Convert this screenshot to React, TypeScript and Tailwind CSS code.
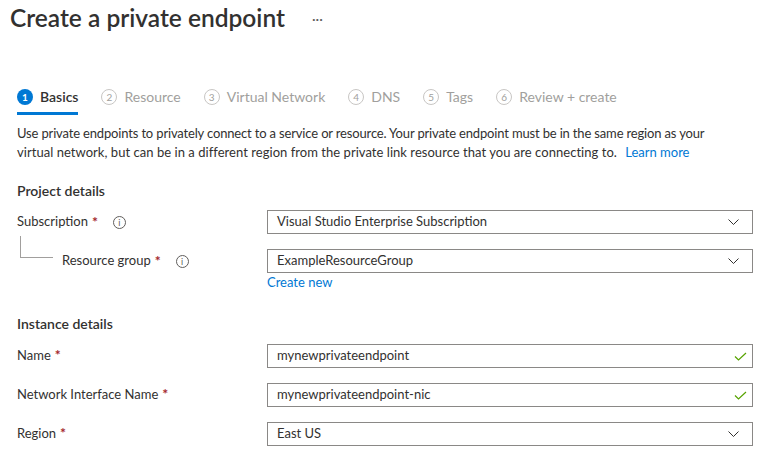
import { type ReactNode } from "react";

const tabs = [
  { n: 1, label: "Basics", active: true },
  { n: 2, label: "Resource" },
  { n: 3, label: "Virtual Network" },
  { n: 4, label: "DNS" },
  { n: 5, label: "Tags" },
  { n: 6, label: "Review + create" },
];

function Chevron() {
  return (
    <svg width="11" height="6" viewBox="0 0 11 6" className="mr-[7px] text-[#323130]">
      <path d="M0.5 0.5l5 5 5-5" fill="none" stroke="currentColor" strokeWidth="1" />
    </svg>
  );
}

function Check() {
  return (
    <svg width="13" height="9" viewBox="0 0 13 9" className="-mr-[1px] text-[#57a300]">
      <path d="M1 4.5l3.5 3.5L12 1" fill="none" stroke="currentColor" strokeWidth="1.2" />
    </svg>
  );
}

function Info() {
  return (
    <span className="ml-[15px] inline-flex h-[13px] w-[13px] items-center justify-center rounded-full border border-[#605e5c] text-[9px] leading-none text-[#605e5c]">
      i
    </span>
  );
}

function Star() {
  return <span className="ml-[4px] text-[14px] font-bold leading-none text-[#a4262c]">*</span>;
}

function Field({ value, icon }: { value: string; icon: ReactNode }) {
  return (
    <div className="flex h-[24px] items-center justify-between border border-[#8a8886] pl-[9px] pr-[6px] text-[13px] text-[#323130]">
      <span>{value}</span>
      {icon}
    </div>
  );
}

export default function App() {
  return (
    <div className="h-[459px] w-[764px] overflow-hidden bg-white text-[#323130]" style={{ fontFamily: "Lato, 'Liberation Sans', sans-serif" }}>
      {/* header */}
      <div className="flex h-[36px] items-center pl-[10px]">
        <h1 className="text-[24.5px] font-semibold leading-[36px] text-[#323130]">Create a private endpoint</h1>
        <span className="ml-[27px] text-[14px] text-[#605e5c]">···</span>
      </div>

      {/* steps */}
      <div className="mt-[45px] flex h-[34px] items-stretch gap-[23px] pl-[17px]">
        {tabs.map((t) => (
          <div
            key={t.n}
            className={`flex items-center gap-[7px] border-b-[3px] text-[14px] ${t.active ? "border-[#0078d4] font-semibold text-[#323130]" : "border-transparent text-[#a19f9d]"}`}
          >
            <span
              className={`flex h-[16px] w-[16px] items-center justify-center rounded-full text-[10px] leading-none ${t.active ? "bg-[#0078d4] font-bold text-white" : "border border-[#c8c6c4] text-[#a19f9d]"}`}
            >
              {t.n}
            </span>
            {t.label}
          </div>
        ))}
      </div>

      <div className="px-[17px] pr-[11px]">
        <p className="mt-[9px] text-[13px] leading-[19px] text-[#323130]">
          <span className="tracking-[-0.16px]">
            Use private endpoints to privately connect to a service or resource. Your private endpoint must be in the same region as your
          </span>
          <br />
          <span className="tracking-[0.04px]">
            virtual network, but can be in a different region from the private link resource that you are connecting to.
          </span>{" "}
          <span className="ml-[5px] text-[#0078d4]">Learn more</span>
        </p>

        <h2 className="mt-[19px] text-[14px] font-semibold leading-[20px]">Project details</h2>

        <div className="mt-[9px] grid grid-cols-[250px_1fr] items-center text-[13px]">
          <div className="flex items-center">
            Subscription
            <Star />
            <Info />
          </div>
          <Field value="Visual Studio Enterprise Subscription" icon={<Chevron />} />
        </div>

        <div className="mt-[15px] grid grid-cols-[250px_1fr] text-[13px]">
          <div className="flex h-[24px] items-center">
            <div className="mb-[15px] ml-[3px] h-[22px] w-[33px] self-end border-b border-l border-[#a19f9d]" />
            <span className="ml-[9px]">Resource group</span>
            <Star />
            <Info />
          </div>
          <div>
            <Field value="ExampleResourceGroup" icon={<Chevron />} />
            <div className="-mt-[1px] leading-[20px] text-[#0078d4]">Create new</div>
          </div>
        </div>

        <h2 className="mt-[22px] text-[14px] font-semibold leading-[20px]">Instance details</h2>

        <div className="mt-[10px] flex flex-col gap-[15px] text-[13px]">
          <div className="grid grid-cols-[250px_1fr] items-center">
            <div>
              Name
              <Star />
            </div>
            <Field value="mynewprivateendpoint" icon={<Check />} />
          </div>
          <div className="grid grid-cols-[250px_1fr] items-center">
            <div>
              Network Interface Name
              <Star />
            </div>
            <Field value="mynewprivateendpoint-nic" icon={<Check />} />
          </div>
          <div className="grid grid-cols-[250px_1fr] items-center">
            <div>
              Region
              <Star />
            </div>
            <Field value="East US" icon={<Chevron />} />
          </div>
        </div>
      </div>
    </div>
  );
}
